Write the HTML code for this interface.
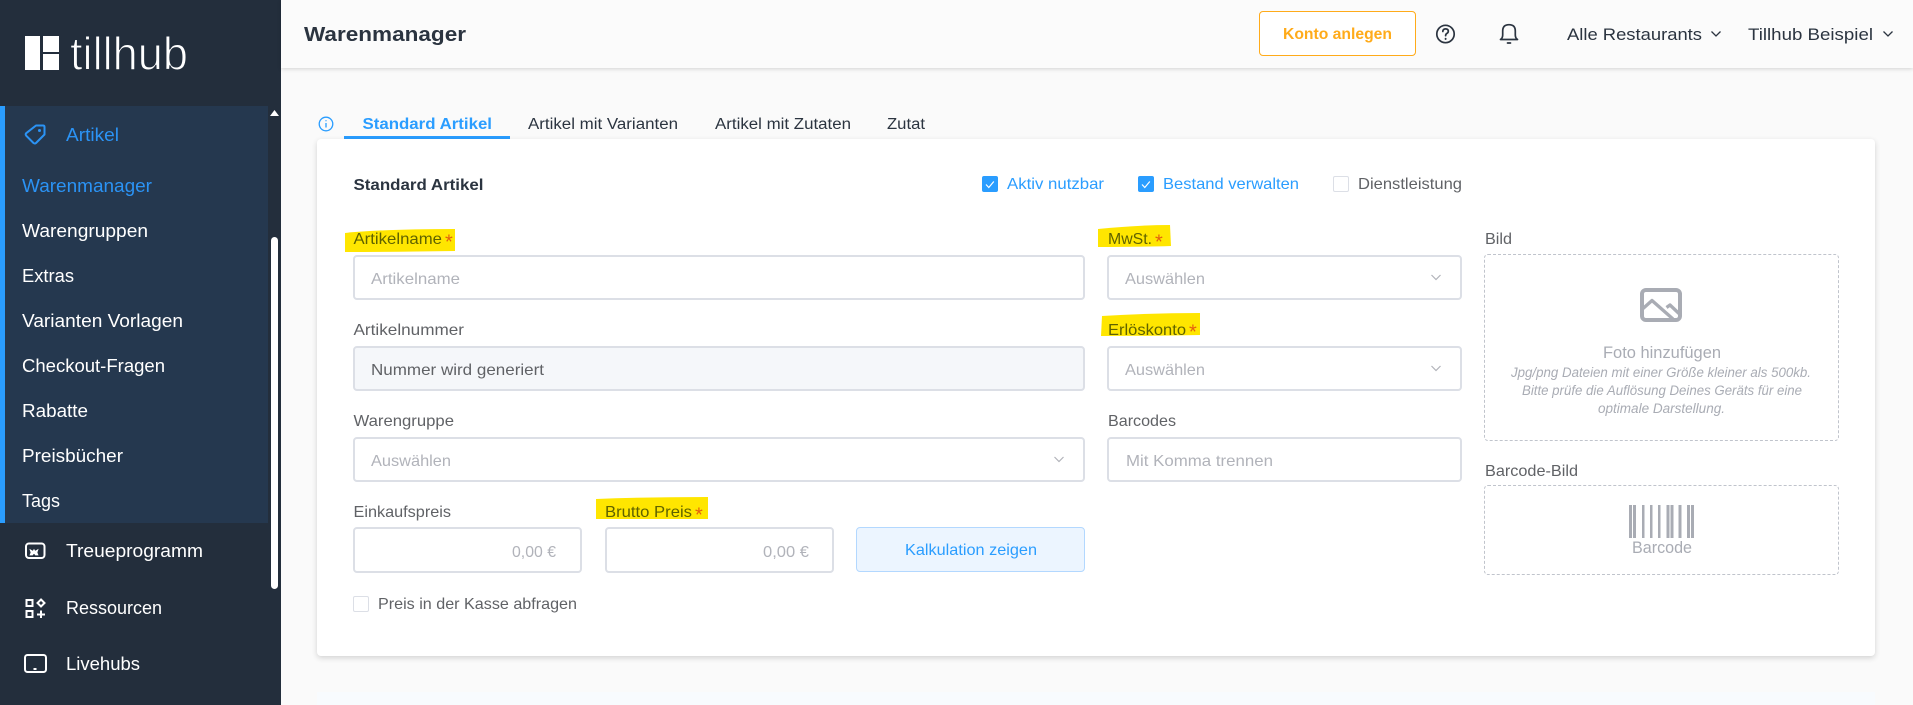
<!DOCTYPE html>
<html lang="de"><head><meta charset="utf-8"><title>Warenmanager</title>
<style>
html,body{margin:0;padding:0;width:1913px;height:705px;overflow:hidden;background:#fafafa}
.b{position:absolute;box-sizing:border-box}
.inp{border:2px solid #dcdfe6;border-radius:4px;background:#fff}
svg{position:absolute;left:0;top:0}
text{font-family:"Liberation Sans",sans-serif;font-size:16px;fill:#606266}
.w{fill:#fff;font-size:18px}
.bl{fill:#2b93f5}
.d{fill:#2b3440}
.ph{fill:#b1b3ba}
.hl{fill:#5f6200}
.ast{fill:#e4600f;font-size:20px}
.s{font-weight:bold}
</style></head><body>
<div class="b" style="left:0;top:0;width:281px;height:705px;background:#232e3c"></div>
<div class="b" style="left:0;top:106px;width:268px;height:417px;background:#25384f;border-left:5px solid #2a9dff"></div>
<div class="b" style="left:271px;top:237px;width:7px;height:352px;background:#fff;border-radius:4px"></div>
<div class="b" style="left:281px;top:0;width:1632px;height:68px;background:#fbfbfb;box-shadow:0 1px 4px rgba(0,0,0,.16)"></div>
<div class="b" style="left:1259px;top:11px;width:157px;height:45px;background:#fff;border:1px solid #ffab1a;border-radius:4px"></div>
<div class="b" style="left:344px;top:136px;width:166px;height:3px;background:#2a9dff"></div>
<div class="b" style="left:317px;top:139px;width:1558px;height:517px;background:#fff;border-radius:4px;box-shadow:0 2px 6px rgba(0,0,0,.16)"></div>
<div class="b" style="left:317px;top:692px;width:1558px;height:13px;background:#f8fbfe"></div>

<div class="b" style="left:982px;top:176px;width:16px;height:16px;background:#2a9dff;border-radius:2px"></div>
<div class="b" style="left:1138px;top:176px;width:16px;height:16px;background:#2a9dff;border-radius:2px"></div>
<div class="b" style="left:1333px;top:176px;width:16px;height:16px;background:#fff;border:1px solid #dcdfe6;border-radius:2px"></div>
<div class="b" style="left:353px;top:596px;width:16px;height:16px;background:#fff;border:1px solid #dcdfe6;border-radius:2px"></div>

<div class="b inp" style="left:353px;top:255px;width:732px;height:45px"></div>
<div class="b inp" style="left:353px;top:346px;width:732px;height:45px;background:#f5f7fa"></div>
<div class="b inp" style="left:353px;top:437px;width:732px;height:45px"></div>
<div class="b inp" style="left:353px;top:527px;width:229px;height:46px"></div>
<div class="b inp" style="left:605px;top:527px;width:229px;height:46px"></div>
<div class="b" style="left:856px;top:527px;width:229px;height:45px;background:#ecf5ff;border:1px solid #b3d8ff;border-radius:4px"></div>
<div class="b inp" style="left:1107px;top:255px;width:355px;height:45px"></div>
<div class="b inp" style="left:1107px;top:346px;width:355px;height:45px"></div>
<div class="b inp" style="left:1107px;top:437px;width:355px;height:45px"></div>
<div class="b" style="left:1484px;top:254px;width:355px;height:187px;border:1px dashed #c0c4cc;border-radius:4px"></div>
<div class="b" style="left:1484px;top:485px;width:355px;height:90px;border:1px dashed #c0c4cc;border-radius:4px"></div>

<svg width="1913" height="705" viewBox="0 0 1913 705" xmlns="http://www.w3.org/2000/svg">
<!-- logo -->
<g fill="#fff"><rect x="25" y="36" width="15" height="34"/><rect x="43" y="36" width="16" height="16"/><rect x="43" y="54" width="16" height="16"/></g>
<text x="70" y="69.500" textLength="118" lengthAdjust="spacingAndGlyphs" style="font-size:46px;fill:#fff;stroke:#232e3c;stroke-width:1.100px">tillhub</text>

<!-- sidebar -->
<path d="M270 116l4.500-6 4.500 6z" fill="#fff"/>
<path d="M36 125.500h7q1.500 0 1.500 1.500v7.500l-8.500 8.500q-1.200 1-2.500 0l-7.300-7.300q-1-1.300 0-2.500z" fill="none" stroke="#2b93f5" stroke-width="2" stroke-linejoin="round"/>
<circle cx="39.500" cy="130.500" r="1.500" fill="#2b93f5"/>
<text class="bl" x="66" y="141" textLength="53" lengthAdjust="spacingAndGlyphs" style="font-size:18px">Artikel</text>
<text class="bl" x="22" y="192" textLength="130" lengthAdjust="spacingAndGlyphs" style="font-size:18px">Warenmanager</text>
<text class="w" x="22" y="237" textLength="126" lengthAdjust="spacingAndGlyphs">Warengruppen</text>
<text class="w" x="22" y="282" textLength="52" lengthAdjust="spacingAndGlyphs">Extras</text>
<text class="w" x="22" y="327" textLength="161" lengthAdjust="spacingAndGlyphs">Varianten Vorlagen</text>
<text class="w" x="22" y="372" textLength="143" lengthAdjust="spacingAndGlyphs">Checkout-Fragen</text>
<text class="w" x="22" y="417" textLength="66" lengthAdjust="spacingAndGlyphs">Rabatte</text>
<text class="w" x="22" y="462" textLength="101" lengthAdjust="spacingAndGlyphs">Preisbücher</text>
<text class="w" x="22" y="507" textLength="38" lengthAdjust="spacingAndGlyphs">Tags</text>
<text class="w" x="66" y="557" textLength="137" lengthAdjust="spacingAndGlyphs">Treueprogramm</text>
<text class="w" x="66" y="614" textLength="96" lengthAdjust="spacingAndGlyphs">Ressourcen</text>
<text class="w" x="66" y="670" textLength="74" lengthAdjust="spacingAndGlyphs">Livehubs</text>

<g fill="none" stroke="#fff" stroke-width="2">
<rect x="26" y="543.500" width="18.500" height="14.500" rx="3"/>
<rect x="26.500" y="600" width="6" height="6" /><rect x="26.500" y="611" width="6" height="6"/>
<path d="M41 599.500l3.500 3.500-3.500 3.500-3.500-3.500z"/><path d="M41 610.500v7.500M37 614.500h8"/>
<rect x="25" y="655" width="21" height="17" rx="2.500"/><path d="M33.500 669h3"/>
</g>
<path d="M30 549.500l3 1.800 1-1.800 1 1.800 3-1.800-1 3 1 2.500-2.500 0-1.500-2-1.500 2-2.500 0 1-2.500z" fill="#fff" stroke="#fff" stroke-width=".7"/>

<!-- header -->
<text class="d s" x="304" y="41" textLength="162" lengthAdjust="spacingAndGlyphs" style="font-size:20px">Warenmanager</text>
<text class="s" x="1283" y="39" textLength="109" lengthAdjust="spacingAndGlyphs" style="font-size:15.500px;fill:#ffab1a">Konto anlegen</text>
<g fill="none" stroke="#2b3440" stroke-width="1.700" stroke-linecap="round" stroke-linejoin="round">
<circle cx="1445.500" cy="34" r="8.700"/>
<path d="M1442.800 31.500q.2-2.600 2.800-2.600 2.700 0 2.700 2.400 0 1.400-1.500 2.200-1.200.7-1.200 2.200"/>
<path d="M1445.600 38.700v.3" stroke-width="1.900"/>
<path d="M1500.500 39.500q2.200-1.400 2.200-4.500v-4q0-6.300 6.300-6.300t6.300 6.300v4q0 3.100 2.200 4.500z"/>
<path d="M1507.500 43h3"/>
</g>
<text class="d" x="1567" y="40" textLength="135" lengthAdjust="spacingAndGlyphs" style="font-size:17px">Alle Restaurants</text>
<text class="d" x="1748" y="40" textLength="125" lengthAdjust="spacingAndGlyphs" style="font-size:17px">Tillhub Beispiel</text>
<g fill="none" stroke="#2b3440" stroke-width="1.300"><path d="M1711.500 31.500l4.500 4.500 4.500-4.500"/><path d="M1883.500 31.500l4.500 4.500 4.500-4.500"/></g>

<!-- tabs -->
<g fill="none" stroke="#2a9dff" stroke-width="1.300"><circle cx="326" cy="124" r="6.800"/><path d="M326 123v4.500M326 120.300v1"/></g>
<text class="s" x="362.500" y="129" textLength="129.500" lengthAdjust="spacingAndGlyphs" style="font-size:15.500px;fill:#2a9dff">Standard Artikel</text>
<text class="d" x="528" y="129" textLength="150" lengthAdjust="spacingAndGlyphs" style="font-size:15.500px">Artikel mit Varianten</text>
<text class="d" x="715" y="129" textLength="136" lengthAdjust="spacingAndGlyphs" style="font-size:15.500px">Artikel mit Zutaten</text>
<text class="d" x="887" y="129" textLength="38" lengthAdjust="spacingAndGlyphs" style="font-size:15.500px">Zutat</text>

<text class="d s" x="353.500" y="190" textLength="130" lengthAdjust="spacingAndGlyphs" style="font-size:15.500px">Standard Artikel</text>

<!-- checkboxes -->
<g fill="none" stroke="#fff" stroke-width="1.200"><path d="M986 184.500l2.800 3 5-6"/><path d="M1142 184.500l2.800 3 5-6"/></g>
<text class="bl" x="1007" y="189" textLength="97" lengthAdjust="spacingAndGlyphs" style="fill:#2a9dff">Aktiv nutzbar</text>
<text class="bl" x="1163" y="189" textLength="136" lengthAdjust="spacingAndGlyphs" style="fill:#2a9dff">Bestand verwalten</text>
<text x="1358" y="189" textLength="104" lengthAdjust="spacingAndGlyphs">Dienstleistung</text>

<!-- highlights -->
<g fill="#ffe600">
<path d="M345 233q40-4 110-4l0 22q-60 1-110 1z"/>
<path d="M1098 229q40-4 72-4l1 21q-30 1-73 1z"/>
<path d="M1102 316q50-3 98-3l0 22q-50 1-99 1z"/>
<path d="M596 499q50-2 112-2l0 22q-60 0-112 0z"/>
</g>

<!-- labels -->
<text class="hl" x="353.500" y="244" textLength="88.500" lengthAdjust="spacingAndGlyphs">Artikelname</text><text class="ast" x="445" y="248.500">*</text>
<text x="353.500" y="335" textLength="110.500" lengthAdjust="spacingAndGlyphs">Artikelnummer</text>
<text x="353.500" y="426" textLength="100.500" lengthAdjust="spacingAndGlyphs">Warengruppe</text>
<text x="353.500" y="517" textLength="97.500" lengthAdjust="spacingAndGlyphs">Einkaufspreis</text>
<text class="hl" x="605" y="517" textLength="87" lengthAdjust="spacingAndGlyphs">Brutto Preis</text><text class="ast" x="695" y="521.500">*</text>
<text class="hl" x="1108" y="244" textLength="44" lengthAdjust="spacingAndGlyphs">MwSt.</text><text class="ast" x="1155" y="248.500">*</text>
<text class="hl" x="1108" y="335" textLength="78" lengthAdjust="spacingAndGlyphs">Erlöskonto</text><text class="ast" x="1189" y="338.500">*</text>
<text x="1108" y="426" textLength="68" lengthAdjust="spacingAndGlyphs">Barcodes</text>
<text x="1485" y="244" textLength="27" lengthAdjust="spacingAndGlyphs">Bild</text>
<text x="1485" y="476" textLength="93" lengthAdjust="spacingAndGlyphs">Barcode-Bild</text>

<!-- values -->
<text class="ph" x="371" y="284" textLength="89" lengthAdjust="spacingAndGlyphs">Artikelname</text>
<text x="371" y="375" textLength="173" lengthAdjust="spacingAndGlyphs">Nummer wird generiert</text>
<text class="ph" x="371" y="466" textLength="80" lengthAdjust="spacingAndGlyphs">Auswählen</text>
<text class="ph" x="512" y="557" textLength="44" lengthAdjust="spacingAndGlyphs">0,00 €</text>
<text class="ph" x="763" y="557" textLength="46" lengthAdjust="spacingAndGlyphs">0,00 €</text>
<text x="905" y="555" textLength="132" lengthAdjust="spacingAndGlyphs" style="fill:#2a9dff">Kalkulation zeigen</text>
<text x="378" y="609" textLength="199" lengthAdjust="spacingAndGlyphs">Preis in der Kasse abfragen</text>
<text class="ph" x="1125" y="284" textLength="80" lengthAdjust="spacingAndGlyphs">Auswählen</text>
<text class="ph" x="1125" y="375" textLength="80" lengthAdjust="spacingAndGlyphs">Auswählen</text>
<text class="ph" x="1126" y="466" textLength="147" lengthAdjust="spacingAndGlyphs">Mit Komma trennen</text>
<g fill="none" stroke="#b1b3ba" stroke-width="1.200"><path d="M1054.500 457l4.500 4.500 4.500-4.500"/><path d="M1431.500 275l4.500 4.500 4.500-4.500"/><path d="M1431.500 366l4.500 4.500 4.500-4.500"/></g>

<!-- image upload -->
<g fill="none" stroke="#a9acb4" stroke-linejoin="round">
<rect x="1642" y="290" width="38" height="30" rx="4" stroke-width="4"/>
<path d="M1642.500 309l9.500-8.500 21 18.500M1666.500 307.500l3.500-2.500 10 9.500" stroke-width="3.300"/>
</g>
<text x="1603" y="358" textLength="118" lengthAdjust="spacingAndGlyphs" style="font-size:17px;fill:#a9acb4">Foto hinzufügen</text>
<g style="font-style:italic">
<text x="1511" y="377" textLength="300" lengthAdjust="spacingAndGlyphs" style="font-size:13.500px;fill:#a9acb4">Jpg/png Dateien mit einer Größe kleiner als 500kb.</text>
<text x="1522" y="395" textLength="280" lengthAdjust="spacingAndGlyphs" style="font-size:13.500px;fill:#a9acb4">Bitte prüfe die Auflösung Deines Geräts für eine</text>
<text x="1598" y="413" textLength="127" lengthAdjust="spacingAndGlyphs" style="font-size:13.500px;fill:#a9acb4">optimale Darstellung.</text>
</g>
<g fill="#a9acb4">
<rect x="1629" y="505" width="3" height="33"/><rect x="1633" y="505" width="3" height="33"/>
<rect x="1642" y="505" width="2.500" height="33"/><rect x="1650" y="505" width="2.500" height="33"/><rect x="1658" y="505" width="2.500" height="33"/>
<rect x="1666.500" y="505" width="3" height="33"/><rect x="1670.500" y="505" width="3" height="33"/>
<rect x="1678.500" y="505" width="3" height="33"/>
<rect x="1687" y="505" width="3" height="33"/><rect x="1691" y="505" width="3" height="33"/>
</g>
<text x="1632" y="553" textLength="60" lengthAdjust="spacingAndGlyphs" style="font-size:17px;fill:#a9acb4">Barcode</text>
</svg>
</body></html>
